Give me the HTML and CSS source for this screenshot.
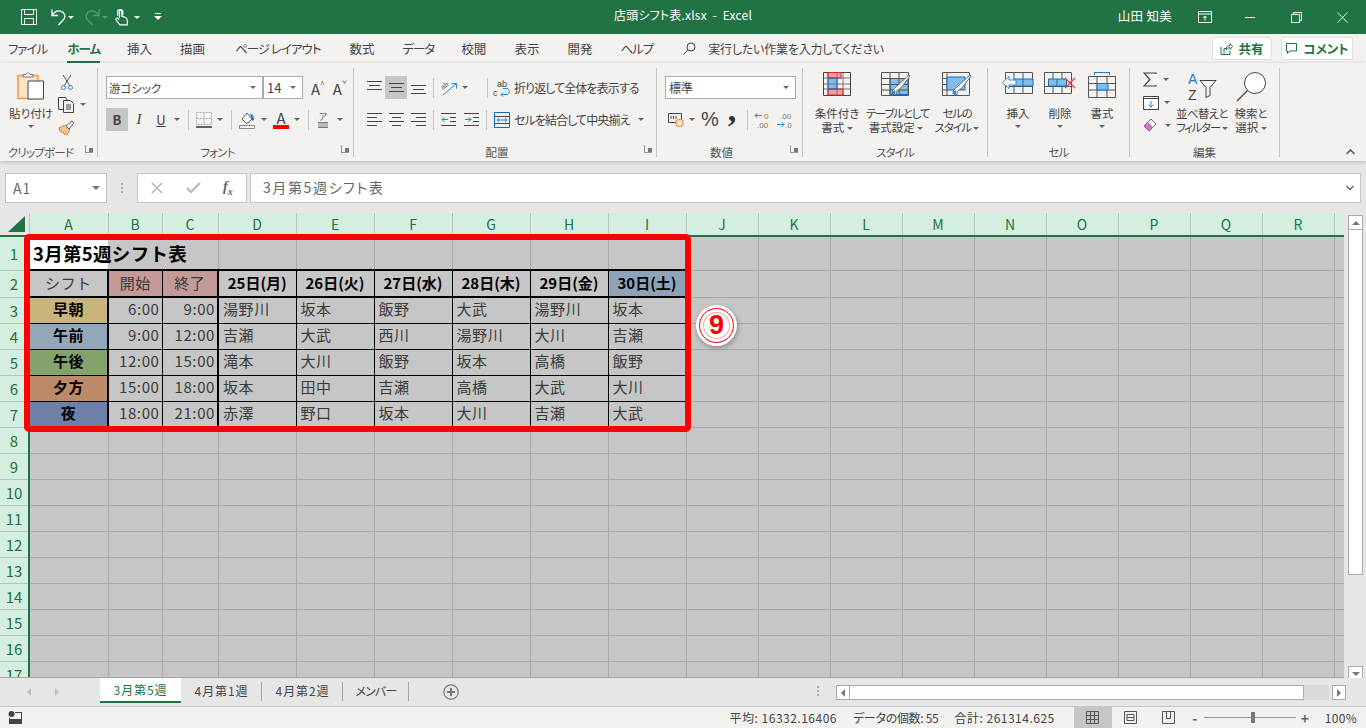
FILE: index.html
```html
<!DOCTYPE html>
<html lang="ja">
<head>
    <meta charset="UTF-8">
    <title>店頭シフト表.xlsx - Excel</title>
    <link rel="stylesheet" href="styles.css">
</head>
<body>

<!-- タイトルバー -->
<header class="titlebar">
    <div class="qat">
        <svg class="qat-save" width="18" height="18" viewBox="0 0 18 18" fill="none" stroke="#fff"><path d="M1.500 1.500h15v15h-15zM4.500 1.500v5h9v-5M4.500 16.500v-6h9v6"/></svg>
        <svg class="qat-undo" width="16" height="18" viewBox="0 0 16 18" fill="none" stroke="#fff" stroke-width="1.300"><path d="M1 1.500v6h6M1.500 7C4 3.500 7 2.500 9.500 3.200c4 1 5.500 5 3.500 7.800L7.500 17"/></svg>
        <span class="dd dd-white qat-dd1"></span>
        <svg class="qat-redo" width="16" height="18" viewBox="0 0 16 18" fill="none" stroke="#5b9a78" stroke-width="1.300"><path d="M15 1.500v6h-6M14.500 7C12 3.500 9 2.500 6.500 3.200c-4 1-5.500 5-3.500 7.800L8.500 17"/></svg>
        <span class="dd dd-dim qat-dd2"></span>
        <svg class="qat-touch" width="14" height="18" viewBox="0 0 16 20" fill="none" stroke="#fff" stroke-width="1.300"><path d="M3 8.500V4c0-3.500 6-3.500 6 0v4M5 11V3.500c0-1.500 2.500-1.500 2.500 0V9l4.500 1.500c1.500.5 2 1.500 2 3V19H5.500L1.500 13.500c-1-1.500 1-3 2.200-1.700L5 13"/></svg>
        <span class="dd dd-white qat-dd3"></span>
        <svg class="qat-more" width="8" height="8" viewBox="0 0 8 8" fill="#fff"><path d="M1 0h6v1H1zM0 3h8L4 7z"/></svg>
    </div>
    <div class="doc-title">店頭シフト表.xlsx&nbsp; -&nbsp; Excel</div>
    <div class="win">
        <span class="user">山田 知美</span>
        <svg class="win-layout" width="14" height="12" viewBox="0 0 14 12" fill="none" stroke="#fff"><path d="M.5.500h13v11H.500zM.5 3h13M7 9.500V5M5 7l2-2 2 2"/></svg>
        <svg class="win-min" width="11" height="11" viewBox="0 0 11 11" stroke="#fff"><path d="M0 5.500h10"/></svg>
        <svg class="win-max" width="11" height="11" viewBox="0 0 11 11" fill="none" stroke="#fff"><path d="M.5 2.500h8v8h-8zM2.500 2.500v-2h8v8h-2"/></svg>
        <svg class="win-close" width="11" height="11" viewBox="0 0 11 11" stroke="#fff"><path d="M.5.500l10 10M10.500.500l-10 10"/></svg>
    </div>
</header>

<!-- タブ -->
<nav class="tabs">
    <span class="tab kana tab-file">ファイル</span>
    <span class="tab kana tab-home">ホーム</span>
    <span class="tab">挿入</span>
    <span class="tab tab-draw">描画</span>
    <span class="tab kana tab-page">ページ レイアウト</span>
    <span class="tab">数式</span>
    <span class="tab kana tab-data">データ</span>
    <span class="tab">校閲</span>
    <span class="tab">表示</span>
    <span class="tab">開発</span>
    <span class="tab kana tab-help">ヘルプ</span>
    <span class="tell">
        <svg width="13" height="13" viewBox="0 0 13 13" fill="none" stroke="#444"><circle cx="8" cy="5" r="4"/><path d="M5 8l-4.500 4.500"/></svg>
        実行したい作業を入力してください
    </span>
    <span class="share">
        <button class="btn btn-share">
            <svg width="13" height="13" viewBox="0 0 13 13" fill="none" stroke="#217346"><path d="M4 11.500V6.500h2M1 5v7.500h9V9M6 8c0-3 2-4.500 4-4.500V1.500l2.500 3L10 7.500V5.500C8.500 5.500 7 6.500 6 8z"/></svg>
            共有
        </button>
        <button class="btn btn-comment">
            <svg width="13" height="13" viewBox="0 0 13 13" fill="none" stroke="#217346"><path d="M1.500 1.500h10v7.500h-7l-2 2.500v-2.500h-1z"/></svg>
            コメント
        </button>
    </span>
</nav>

<!-- リボン -->
<section class="ribbon">

    <div class="group g-clip">
        <div class="group-body flex">
            <div class="large paste">
                <div class="large-icon">
                    <svg width="28" height="28" viewBox="0 0 28 28"><path d="M1 3.500h20v23H1z" fill="#fbe3c8" stroke="#ed9a45" stroke-width="1.500"/><path d="M6 5V2.500h3C9 .5 13 .5 13 2.500h3V5z" fill="#fff" stroke="#777"/><path d="M11 9h15.500v18H11z" fill="#fff" stroke="#444"/></svg>
                </div>
                <div class="large-label">貼り付け</div>
                <span class="dd dd-center"></span>
            </div>
            <div class="stack">
                <div class="tool t-cut"><svg width="12" height="16" viewBox="0 0 12 16" fill="none"><path d="M2 1l7 11M10 1L3 12" stroke="#555"/><circle cx="2.500" cy="13.500" r="2" stroke="#2b88d8"/><circle cx="9.500" cy="13.500" r="2" stroke="#2b88d8"/></svg></div>
                <div class="tool t-copy"><svg width="17" height="16" viewBox="0 0 17 16" fill="none" stroke="#444"><path d="M5 12.500H.5V.500h7l2 3"/><path d="M5.500 3.500h7l3 3v9h-10zM8 8h5M8 10h5M8 12h5"/></svg><span class="dd dd-copy"></span></div>
                <div class="tool t-brush"><svg width="17" height="16" viewBox="0 0 17 16"><path d="M1 8l6-3 5 5-3 5-3-1-1-2-1 1-1-2-1 0z" fill="#f6c48e" stroke="#ed7d31"/><path d="M8 6l6-5 2 2-5 6z" fill="#fff" stroke="#555"/></svg></div>
            </div>
        </div>
        <div class="group-label kana-label shift-left">クリップボード</div>
        <span class="launcher"></span>
    </div>

    <div class="group g-font">
        <div class="group-body">
            <div class="row">
                <div class="combo c-font"><span>游ゴシック</span><span class="dd"></span></div>
                <div class="combo c-size"><span>14</span><span class="dd"></span></div>
                <div class="tool w22 grow-a">A<sup>^</sup></div>
                <div class="tool w22 grow-a">A<sup class="blue">ˇ</sup></div>
            </div>
            <div class="row row2">
                <div class="tool w22 on bold-b">B</div>
                <div class="tool w22 ital">I</div>
                <div class="tool w22 under">U</div>
                <div class="tool w10"><span class="dd"></span></div>
                <div class="vsep w12"></div>
                <div class="tool w19"><svg width="16" height="16" viewBox="0 0 16 16" fill="none"><path d="M.5.500h15v12H.500zM8 .500v12M.5 6.500h15" stroke="#aaa" stroke-dasharray="2 1"/><path d="M0 15h16" stroke="#333" stroke-width="1.500"/></svg></div>
                <div class="tool w14"><span class="dd"></span></div>
                <div class="vsep w8"></div>
                <div class="tool w24"><svg width="17" height="18" viewBox="0 0 17 18"><path d="M3 8l5-6 5 6-4 4H7z" fill="#fff" stroke="#555"/><path d="M11 3c3 0 4 3 4 6l-1.500 1-1-3z" fill="#1e78c8"/><path d="M.5 14.500h15v3H.500z" fill="#fff" stroke="#888"/></svg></div>
                <div class="tool w10"><span class="dd"></span></div>
                <div class="tool w24 color-a">A</div>
                <div class="tool w8"><span class="dd"></span></div>
                <div class="vsep w14"></div>
                <div class="tool w16 phon">ア<i></i></div>
                <div class="tool w18"><span class="dd"></span></div>
            </div>
        </div>
        <div class="group-label kana-label shift-left">フォント</div>
        <span class="launcher"></span>
    </div>

    <div class="group g-align">
        <div class="group-body">
            <div class="row">
                <div class="tool w22"><svg width="15" height="15" viewBox="0 0 15 15" stroke="#444"><path d="M0 1.500h15M2 5.500h11M0 9.500h15"/></svg></div>
                <div class="tool w22 on"><svg width="15" height="15" viewBox="0 0 15 15" stroke="#444"><path d="M0 3.500h15M2 7.500h11M0 11.500h15"/></svg></div>
                <div class="tool w22"><svg width="15" height="15" viewBox="0 0 15 15" stroke="#444"><path d="M0 5.500h15M2 9.500h11M0 13.500h15"/></svg></div>
                <div class="vsep w8"></div>
                <div class="tool w24"><svg width="18" height="18" viewBox="0 0 18 18" fill="none"><text class="svg-orient" transform="translate(3 11) rotate(-40)">ab</text><path d="M3 16L16 5M11.500 4.500h5v5" stroke="#1e88d8"/></svg></div>
                <div class="tool w8"><span class="dd"></span></div>
                <div class="tool w14"></div>
                <div class="vsep w8"></div>
                <div class="tool w22"><svg width="18" height="18" viewBox="0 0 18 18" fill="none"><text class="svg-ab" x="4" y="8">ab</text><text class="svg-ab" x="0" y="17">c</text><path d="M10 9.500h4c3 0 3 6 0 6H8M10 13.500l-2 2 2 2" stroke="#1e88d8"/></svg></div>
                <span class="tool-text">折り返して全体を表示する</span>
            </div>
            <div class="row row2">
                <div class="tool w22"><svg width="15" height="15" viewBox="0 0 15 15" stroke="#444"><path d="M0 1.500h15M0 5.500h10M0 9.500h15M0 13.500h10"/></svg></div>
                <div class="tool w22"><svg width="15" height="15" viewBox="0 0 15 15" stroke="#444"><path d="M0 1.500h15M3 5.500h9M0 9.500h15M3 13.500h9"/></svg></div>
                <div class="tool w22"><svg width="15" height="15" viewBox="0 0 15 15" stroke="#444"><path d="M0 1.500h15M5 5.500h10M0 9.500h15M5 13.500h10"/></svg></div>
                <div class="vsep w8"></div>
                <div class="tool w23"><svg width="15" height="15" viewBox="0 0 15 15" fill="none"><path d="M0 1.500h15M9 5.500h6M9 9.500h6M0 13.500h15" stroke="#444"/><path d="M7 7.500H1M3.500 5l-2.500 2.500 2.500 2.500" stroke="#1e88d8"/></svg></div>
                <div class="tool w22"><svg width="15" height="15" viewBox="0 0 15 15" fill="none"><path d="M0 1.500h15M9 5.500h6M9 9.500h6M0 13.500h15" stroke="#444"/><path d="M1 7.500h6M4.500 5l2.500 2.500-2.500 2.500" stroke="#1e88d8"/></svg></div>
                <div class="vsep w8"></div>
                <div class="tool w23"><svg width="16" height="16" viewBox="0 0 16 16" fill="none"><path d="M.5.500h15v15H.500z" stroke="#106ebe"/><path d="M.5 4.500h15M.5 11.500h15" stroke="#444"/><path d="M3 8h10M5 6L3 8l2 2M11 6l2 2-2 2" stroke="#1e88d8"/></svg></div>
                <span class="tool-text merge">セルを結合して中央揃え</span>
                <span class="dd"></span>
            </div>
        </div>
        <div class="group-label shift-left">配置</div>
        <span class="launcher"></span>
    </div>

    <div class="group g-num">
        <div class="group-body">
            <div class="row">
                <div class="combo c-num"><span>標準</span><span class="dd"></span></div>
            </div>
            <div class="row row2">
                <div class="tool w21"><svg width="16" height="15" viewBox="0 0 16 15" fill="none"><path d="M.5 1.500h13v9H.500z" stroke="#444"/><path d="M3 4v3M5.500 4v3M8 4v3" stroke="#444"/><ellipse cx="11.500" cy="9" rx="3.500" ry="1.500" fill="#fbe3c8" stroke="#ed7d31"/><path d="M8 9v4c0 2 7 2 7 0V9" fill="#fbe3c8" stroke="#ed7d31"/></svg></div>
                <div class="tool w12"><span class="dd"></span></div>
                <div class="tool w24 pct">%</div>
                <div class="tool w20 comma">,</div>
                <div class="vsep w10"></div>
                <div class="tool w21"><svg width="17" height="18" viewBox="0 0 17 18" fill="none"><path d="M8 4.500H1M3.500 2L1 4.500 3.500 7" stroke="#1e88d8"/><text class="svg-dec" x="10" y="8">0</text><text class="svg-dec" x="3" y="17">.00</text></svg></div>
                <div class="tool w23"><svg width="17" height="18" viewBox="0 0 17 18" fill="none"><path d="M1 13.500h7M5.500 11L8 13.500 5.500 16" stroke="#1e88d8"/><text class="svg-dec" x="4" y="8">.00</text><text class="svg-dec" x="9" y="17">.0</text></svg></div>
            </div>
        </div>
        <div class="group-label shift-left">数値</div>
        <span class="launcher"></span>
    </div>

    <div class="group g-style">
        <div class="group-body flex">
            <div class="large w58">
                <div class="large-icon">
                    <svg width="28" height="24" viewBox="0 0 28 24" fill="none"><path d="M5 .5h13v5.500H5zM5 17h15v6H5z" fill="#ff9ca3"/><path d="M5 6h9v11H5z" fill="#83bbea"/><path d="M.5 6h27M.5 17h27M.5 12h27M5 .5v23M14 .5v23M20 .5v23" stroke="#777"/><path d="M.5.500h27v23H.500z" stroke="#444"/><path d="M5 .5h13v5.500H5zM5 17h15v6H5z" stroke="#d8232a"/><path d="M5 6h9v11H5z" stroke="#106ebe"/></svg>
                </div>
                <div class="large-label">条件付き<br>書式 <span class="dd"></span></div>
            </div>
            <div class="large w60">
                <div class="large-icon">
                    <svg width="30" height="24" viewBox="0 0 30 24" fill="none"><path d="M9 6.500h18v16H9z" fill="#83bbea" stroke="#106ebe"/><path d="M.5.500h27v23H.500zM.5 6.500h27M.5 12.500h27M.5 18h27M9 .5v23M18 .5v23" stroke="#555"/><path d="M15 23c0-4 2-6 4-6l10-13-1-1-12 11c-2 1-3 4-5 5 1 2 2 4 4 4z" fill="#fff" stroke="#666"/><path d="M13 23c1-1 2-3 1-5l-4 3c1 1 2 2 3 2z" fill="#2b88d8"/></svg>
                </div>
                <div class="large-label"><span class="narrow">テーブルとして</span><br>書式設定 <span class="dd"></span></div>
            </div>
            <div class="large w62">
                <div class="large-icon">
                    <svg width="30" height="24" viewBox="0 0 30 24" fill="none"><path d="M.5.500h27v23H.500zM.5 6.500h5M.5 12.500h5M.5 18h5M5 .5v23" stroke="#555"/><path d="M5 5h18v13H5z" fill="#83bbea" stroke="#106ebe"/><path d="M15 23c0-4 2-6 4-6l10-13-1-1-12 11c-2 1-3 4-5 5 1 2 2 4 4 4z" fill="#fff" stroke="#666"/><path d="M13 23c1-1 2-3 1-5l-4 3c1 1 2 2 3 2z" fill="#2b88d8"/></svg>
                </div>
                <div class="large-label"><span class="narrow">セルの</span><br><span class="narrow">スタイル</span> <span class="dd"></span></div>
            </div>
        </div>
        <div class="group-label kana-label">スタイル</div>
    </div>

    <div class="group g-cell">
        <div class="group-body flex">
            <div class="large w42">
                <div class="large-icon">
                    <svg width="32" height="22" viewBox="0 0 32 22" fill="none"><path d="M3.500.500h27v21h-27zM3.500 14.500h27M12 .5v21M21 .5v21" stroke="#555"/><path d="M12 7h19v7H12z" fill="#83bbea" stroke="#106ebe"/><path d="M21 7v7" stroke="#106ebe"/><path d="M14 8v5H7v3.500L.5 10.500 7 4.500V8z" fill="#fff" stroke="#2b88d8"/></svg>
                </div>
                <div class="large-label">挿入</div>
                <span class="dd dd-center"></span>
            </div>
            <div class="large w42">
                <div class="large-icon">
                    <svg width="32" height="22" viewBox="0 0 32 22" fill="none"><path d="M.5.500h27v21H.500zM.5 14.500h27M9 .5v21M18 .5v21" stroke="#555"/><path d="M4.500 7h18v7h-18z" fill="#83bbea" stroke="#106ebe"/><path d="M13 7v7" stroke="#106ebe"/><path d="M21 6l10 10M31 6L21 16" stroke="#ee3b3b" stroke-width="1.300"/></svg>
                </div>
                <div class="large-label">削除</div>
                <span class="dd dd-center"></span>
            </div>
            <div class="large w42">
                <div class="large-icon">
                    <svg width="28" height="26" viewBox="0 0 28 26" fill="none"><path d="M6 .5h16M6.500 0v3M21.500 0v3" stroke="#1e78c8"/><path d="M.5 4.500h27v21H.500zM.5 11.500h27M.5 18h27M9 4.500v21M19 4.500v21" stroke="#555"/><path d="M9 11.500h11V18H9z" fill="#83bbea" stroke="#106ebe"/></svg>
                </div>
                <div class="large-label">書式</div>
                <span class="dd dd-center"></span>
            </div>
        </div>
        <div class="group-label kana-label">セル</div>
    </div>

    <div class="group g-edit">
        <div class="group-body flex">
            <div class="stack w36">
                <div class="tool t-edit"><svg width="15" height="15" viewBox="0 0 15 15" fill="none" stroke="#444" stroke-width="1.200"><path d="M13 2V1H1l6 6.500L1 14h12v-1"/></svg><span class="dd"></span></div>
                <div class="tool t-edit"><svg width="16" height="14" viewBox="0 0 16 14" fill="none"><path d="M.5.500h15v13H.500z" fill="#fff" stroke="#444"/><path d="M.5 2.500h15" stroke="#444"/><path d="M8 5v6M5.500 8.500L8 11l2.500-2.500" stroke="#1e88d8"/></svg><span class="dd"></span></div>
                <div class="tool t-edit"><svg width="17" height="15" viewBox="0 0 17 15"><path d="M1 8l7-7 5 5-7 7z" fill="#fff" stroke="#a349a4"/><path d="M1 8l3.500-3.500 5 5L6 13z" fill="#c879c9" stroke="#a349a4"/></svg><span class="dd"></span></div>
            </div>
            <div class="large w52">
                <div class="large-icon">
                    <svg width="30" height="32" viewBox="0 0 30 32" fill="none"><text class="svg-az blue-fill" x="1" y="12">A</text><text class="svg-az" x="1" y="28">Z</text><path d="M13 8.500h16l-6 7v8l-4 2v-10z" stroke="#444"/></svg>
                </div>
                <div class="large-label"><span class="narrow-s">並べ替えと</span><br><span class="narrow">フィルター</span> <span class="dd"></span></div>
            </div>
            <div class="large w46">
                <div class="large-icon">
                    <svg width="30" height="30" viewBox="0 0 30 30" fill="none" stroke="#444"><circle cx="19" cy="11" r="10.500" fill="#fff"/><path d="M11.500 18.500L1 29" stroke-width="1.200"/></svg>
                </div>
                <div class="large-label">検索と<br>選択 <span class="dd"></span></div>
            </div>
        </div>
        <div class="group-label">編集</div>
    </div>

    <svg class="collapse" width="9" height="6" viewBox="0 0 9 6" fill="none" stroke="#555" stroke-width="1.500"><path d="M.5 5L4.500 1l4 4"/></svg>
</section>

<!-- 数式バー -->
<section class="fbar">
    <div class="namebox"><span>A1</span><span class="dd dd-big"></span></div>
    <div class="fdots"></div>
    <div class="fbtns">
        <svg width="12" height="12" viewBox="0 0 12 12" stroke="#b5b5b5" stroke-width="1.500"><path d="M1 1l10 10M11 1L1 11"/></svg>
        <svg width="15" height="12" viewBox="0 0 15 12" fill="none" stroke="#b5b5b5" stroke-width="2"><path d="M1 6l4 4 9-9"/></svg>
        <span class="fx">f<sub>x</sub></span>
    </div>
    <div class="finput"><span class="ftext">3月第5週シフト表</span>
        <svg width="8" height="6" viewBox="0 0 8 6" fill="none" stroke="#666" stroke-width="1.500"><path d="M.5 1L4 4.500 7.500 1"/></svg>
    </div>
</section>

<!-- シート -->
<main class="sheet">
    <div class="grid-wrap">
        <table class="grid">
            <colgroup>
                <col class="c-rh"><col class="c-a"><col class="c-b"><col class="c-c">
                <col class="c-wide"><col class="c-wide"><col class="c-wide"><col class="c-wide"><col class="c-wide"><col class="c-wide">
                <col class="c-std"><col class="c-std"><col class="c-std"><col class="c-std"><col class="c-std"><col class="c-std"><col class="c-std"><col class="c-std"><col class="c-std">
                <col class="c-end">
            </colgroup>
            <thead>
                <tr class="r-head">
                    <th class="corner"><span class="tri"></span></th>
                    <th>A</th><th>B</th><th>C</th><th>D</th><th>E</th><th>F</th><th>G</th><th>H</th><th>I</th>
                    <th>J</th><th>K</th><th>L</th><th>M</th><th>N</th><th>O</th><th>P</th><th>Q</th><th>R</th><th></th>
                </tr>
            </thead>
            <tbody>
                <tr class="r1">
                    <th>1</th><td class="title active">3月第5週シフト表</td><td class="nob"></td><td class="nob"></td>
                    <td></td><td></td><td></td><td></td><td></td><td class="edge"></td>
                    <td></td><td></td><td></td><td></td><td></td><td></td><td></td><td></td><td></td><td></td>
                </tr>
                <tr class="r2">
                    <th>2</th><td class="b ctr thick">シフト</td><td class="b ctr rose">開始</td><td class="b ctr rose thick">終了</td>
                    <td class="b hd">25日(月)</td><td class="b hd">26日(火)</td><td class="b hd">27日(水)</td><td class="b hd">28日(木)</td><td class="b hd">29日(金)</td><td class="b hd sat edge">30日(土)</td>
                    <td></td><td></td><td></td><td></td><td></td><td></td><td></td><td></td><td></td><td></td>
                </tr>
                <tr>
                    <th>3</th><td class="b shift morning">早朝</td><td class="b time">6:00</td><td class="b time thick">9:00</td>
                    <td class="b">湯野川</td><td class="b">坂本</td><td class="b">飯野</td><td class="b">大武</td><td class="b">湯野川</td><td class="b edge">坂本</td>
                    <td></td><td></td><td></td><td></td><td></td><td></td><td></td><td></td><td></td><td></td>
                </tr>
                <tr>
                    <th>4</th><td class="b shift forenoon">午前</td><td class="b time">9:00</td><td class="b time thick">12:00</td>
                    <td class="b">吉瀬</td><td class="b">大武</td><td class="b">西川</td><td class="b">湯野川</td><td class="b">大川</td><td class="b edge">吉瀬</td>
                    <td></td><td></td><td></td><td></td><td></td><td></td><td></td><td></td><td></td><td></td>
                </tr>
                <tr>
                    <th>5</th><td class="b shift afternoon">午後</td><td class="b time">12:00</td><td class="b time thick">15:00</td>
                    <td class="b">滝本</td><td class="b">大川</td><td class="b">飯野</td><td class="b">坂本</td><td class="b">高橋</td><td class="b edge">飯野</td>
                    <td></td><td></td><td></td><td></td><td></td><td></td><td></td><td></td><td></td><td></td>
                </tr>
                <tr>
                    <th>6</th><td class="b shift evening">夕方</td><td class="b time">15:00</td><td class="b time thick">18:00</td>
                    <td class="b">坂本</td><td class="b">田中</td><td class="b">吉瀬</td><td class="b">高橋</td><td class="b">大武</td><td class="b edge">大川</td>
                    <td></td><td></td><td></td><td></td><td></td><td></td><td></td><td></td><td></td><td></td>
                </tr>
                <tr>
                    <th>7</th><td class="b shift night">夜</td><td class="b time">18:00</td><td class="b time thick">21:00</td>
                    <td class="b">赤澤</td><td class="b">野口</td><td class="b">坂本</td><td class="b">大川</td><td class="b">吉瀬</td><td class="b edge">大武</td>
                    <td></td><td></td><td></td><td></td><td></td><td></td><td></td><td></td><td></td><td></td>
                </tr>
                <tr><th>8</th><td></td><td></td><td></td><td></td><td></td><td></td><td></td><td></td><td></td><td></td><td></td><td></td><td></td><td></td><td></td><td></td><td></td><td></td><td></td></tr>
                <tr><th>9</th><td></td><td></td><td></td><td></td><td></td><td></td><td></td><td></td><td></td><td></td><td></td><td></td><td></td><td></td><td></td><td></td><td></td><td></td><td></td></tr>
                <tr><th>10</th><td></td><td></td><td></td><td></td><td></td><td></td><td></td><td></td><td></td><td></td><td></td><td></td><td></td><td></td><td></td><td></td><td></td><td></td><td></td></tr>
                <tr><th>11</th><td></td><td></td><td></td><td></td><td></td><td></td><td></td><td></td><td></td><td></td><td></td><td></td><td></td><td></td><td></td><td></td><td></td><td></td><td></td></tr>
                <tr><th>12</th><td></td><td></td><td></td><td></td><td></td><td></td><td></td><td></td><td></td><td></td><td></td><td></td><td></td><td></td><td></td><td></td><td></td><td></td><td></td></tr>
                <tr><th>13</th><td></td><td></td><td></td><td></td><td></td><td></td><td></td><td></td><td></td><td></td><td></td><td></td><td></td><td></td><td></td><td></td><td></td><td></td><td></td></tr>
                <tr><th>14</th><td></td><td></td><td></td><td></td><td></td><td></td><td></td><td></td><td></td><td></td><td></td><td></td><td></td><td></td><td></td><td></td><td></td><td></td><td></td></tr>
                <tr><th>15</th><td></td><td></td><td></td><td></td><td></td><td></td><td></td><td></td><td></td><td></td><td></td><td></td><td></td><td></td><td></td><td></td><td></td><td></td><td></td></tr>
                <tr><th>16</th><td></td><td></td><td></td><td></td><td></td><td></td><td></td><td></td><td></td><td></td><td></td><td></td><td></td><td></td><td></td><td></td><td></td><td></td><td></td></tr>
                <tr><th>17</th><td></td><td></td><td></td><td></td><td></td><td></td><td></td><td></td><td></td><td></td><td></td><td></td><td></td><td></td><td></td><td></td><td></td><td></td><td></td></tr>
            </tbody>
        </table>
        <!-- 説明用の赤枠と番号 -->
        <div class="red-frame"></div>
        <div class="badge"><span>9</span></div>
    </div>
    <div class="vscroll">
        <div class="sb-btn"><span class="tri-up"></span></div>
        <div class="sb-thumb"></div>
        <div class="sb-track"></div>
        <div class="sb-btn"><span class="tri-down"></span></div>
    </div>
</main>

<!-- シートタブ -->
<section class="sheetbar">
    <div class="sheet-nav">
        <span class="tri-left"></span>
        <span class="tri-right"></span>
    </div>
    <div class="sheet-tab active-tab">3月第5週</div>
    <div class="sheet-tab">4月第1週</div>
    <div class="sheet-tab">4月第2週</div>
    <div class="sheet-tab member">メンバー</div>
    <svg class="add" width="16" height="16" viewBox="0 0 16 16" fill="none" stroke="#777"><circle cx="8" cy="8" r="7.200" stroke-width="1.200"/><path d="M8 4v8M4 8h8" stroke-width="2"/></svg>
    <div class="hdots"></div>
    <div class="hscroll">
        <div class="sb-btn h"><span class="tri-left dark"></span></div>
        <div class="h-thumb"></div>
        <div class="h-track"></div>
        <div class="sb-btn h"><span class="tri-right dark"></span></div>
    </div>
</section>

<!-- ステータスバー -->
<footer class="status">
    <svg class="macro" width="14" height="13" viewBox="0 0 14 13" fill="#444"><circle cx="3.500" cy="3" r="3"/><path d="M7 1h7v12H1V7h1v1h11V2H7zM3 9h2v1H3zm3 0h2v1H6zm3 0h2v1H9zm-6 2h2v1H3zm3 0h2v1H6zm3 0h2v1H9z"/></svg>
    <div class="stats">
        <span class="st-avg">平均: 16332.16406</span>
        <span class="st-count">データの個数: 55</span>
        <span class="st-sum">合計: 261314.625</span>
    </div>
    <div class="view on">
        <svg width="13" height="13" viewBox="0 0 13 13" fill="none" stroke="#555"><path d="M.5.500h12v12H.500zM.5 4.500h12M.5 8.500h12M4.500.500v12M8.500.500v12"/></svg>
    </div>
    <div class="view">
        <svg width="13" height="13" viewBox="0 0 13 13" fill="none" stroke="#555"><path d="M.5.500h12v12H.500zM3 3.500h7v6H3zM3 6.500h7"/></svg>
    </div>
    <div class="view view-last">
        <svg width="13" height="13" viewBox="0 0 13 13" fill="none" stroke="#555"><path d="M.5.500h12v12H.500zM4.500.500v7h4v-7"/></svg>
    </div>
    <div class="zoom">
        <span class="z-btn">-</span>
        <div class="slider"><span class="knob"></span></div>
        <span class="z-btn">+</span>
    </div>
    <span class="zoom-val">100%</span>
</footer>

</body>
</html>
```

FILE: styles.css
```css
* {
    box-sizing: border-box;
}

html, body {
    margin: 0;
    padding: 0;
    height: 728px;
    overflow: hidden;
}

body {
    width: 1366px;
    font-family: "Noto Sans CJK JP", "Noto Sans", sans-serif;
    font-size: 12px;
    font-feature-settings: "palt";
    color: #444;
    background-color: #e6e6e6;
    display: flex;
    flex-direction: column;
}

/* 共通パーツ */
.dd {
    display: inline-block;
    width: 0;
    height: 0;
    border-left: 3px solid transparent;
    border-right: 3px solid transparent;
    border-top: 3px solid #666;
    vertical-align: middle;
}

.dd-white { border-top-color: #fff; }
.dd-dim { border-top-color: #5b9a78; }
.dd-center { display: block; margin: 5px auto 0; }
.dd-big {
    border-left-width: 4px;
    border-right-width: 4px;
    border-top-width: 4px;
    border-top-color: #777;
}

.flex { display: flex; }

.w8 { width: 8px; }
.w10 { width: 10px; }
.w12 { width: 12px; }
.w14 { width: 14px; }
.w16 { width: 16px; }
.w18 { width: 18px; }
.w19 { width: 19px; }
.w20 { width: 20px; }
.w21 { width: 21px; }
.w22 { width: 22px; }
.w23 { width: 23px; }
.w24 { width: 24px; }
.w36 { width: 36px; }
.w42 { width: 42px; }
.w46 { width: 46px; }
.w52 { width: 52px; }
.w58 { width: 58px; }
.w60 { width: 60px; }
.w62 { width: 62px; }

/* タイトルバー */
.titlebar {
    height: 34px;
    background-color: #217346;
    color: #fff;
    display: grid;
    grid-template-columns: 1fr auto 1fr;
    align-items: center;
    flex: none;
}

.qat {
    display: flex;
    align-items: center;
    padding-left: 20px;
}

.qat-undo { margin-left: 13px; }
.qat-dd1 { margin-left: 1px; }
.qat-redo { margin-left: 10px; }
.qat-dd2 { margin-left: 2px; }
.qat-touch { margin-left: 7px; }
.qat-dd3 { margin-left: 5px; }
.qat-more { margin-left: 14px; }

.doc-title {
    font-size: 12px;
    letter-spacing: 0.2px;
    padding-bottom: 6px;
}

.win {
    display: flex;
    align-items: center;
    justify-content: flex-end;
    padding-right: 18px;
}

.user {
    font-size: 12.500px;
    letter-spacing: 0.3px;
    padding-bottom: 4px;
}

.win-layout { margin-left: 26px; }
.win-min { margin-left: 33px; }
.win-max { margin-left: 35px; }
.win-close { margin-left: 35px; }

/* タブ */
.tabs {
    height: 29px;
    background-color: #f3f2f1;
    display: flex;
    align-items: center;
    padding-left: 8px;
    position: relative;
    flex: none;
    font-size: 12.500px;
}

.tab {
    margin-right: 28px;
    white-space: nowrap;
    line-height: 20px;
    color: #444;
}

.kana { letter-spacing: -1px; }

.tab-file { margin-right: 20px; }

.tab-home {
    font-weight: 700;
    color: #217346;
    margin-right: 27px;
    position: relative;
}

.tab-home::after {
    content: "";
    position: absolute;
    left: 0;
    right: 0;
    bottom: -5px;
    height: 3px;
    background-color: #217346;
}

.tab-draw { margin-right: 30px; }
.tab-page { margin-right: 29px; }
.tab-data { margin-right: 27px; }
.tab-help { margin-right: 30px; }

.tell {
    display: flex;
    align-items: center;
    gap: 12px;
    font-size: 12px;
    letter-spacing: -0.2px;
}

.share {
    margin-left: auto;
    margin-right: 13px;
    display: flex;
    gap: 9px;
}

.btn {
    height: 23px;
    background-color: #fff;
    border: 1px solid #e1dfdd;
    border-radius: 2px;
    color: #217346;
    font: inherit;
    font-weight: 700;
    font-size: 12.500px;
    font-feature-settings: "palt";
    display: flex;
    align-items: center;
    justify-content: center;
    gap: 5px;
    padding: 0;
}

.btn-share { width: 60px; }
.btn-comment { width: 72px; }

/* リボン */
.ribbon {
    height: 98px;
    background-color: #f3f2f1;
    display: flex;
    align-items: flex-start;
    position: relative;
    flex: none;
    box-shadow: 0 1px 4px rgba(0, 0, 0, 0.22);
    z-index: 1;
    padding-top: 5px;
}

.group {
    height: 89px;
    border-right: 1px solid #c8c6c4;
    position: relative;
    flex: none;
}

.g-clip { width: 98px; }
.g-font { width: 256px; padding-left: 8px; }
.g-align { width: 303px; padding-left: 9px; }
.g-num { width: 146px; padding-left: 8px; }
.g-style { width: 185px; padding-left: 5px; }
.g-cell { width: 142px; padding-left: 9px; }
.g-edit { width: 150px; padding-left: 10px; }

.group-body { height: 73px; }

.group-label {
    position: absolute;
    left: 0;
    right: 0;
    top: 76px;
    text-align: center;
    font-size: 11.500px;
    line-height: 16px;
    color: #555;
}

.kana-label { letter-spacing: -0.8px; }
.shift-left { padding-right: 16px; }

.launcher {
    position: absolute;
    right: 4px;
    bottom: 4px;
    width: 8px;
    height: 8px;
    border-left: 1px solid #999;
    border-bottom: 1px solid #999;
}

.launcher::after {
    content: "";
    position: absolute;
    right: 0;
    bottom: 0;
    width: 4px;
    height: 4px;
    background-color: #777;
}

.row {
    display: flex;
    align-items: center;
    height: 23px;
    margin-top: 8px;
}

.row2 { margin-top: 9px; }

.tool {
    height: 23px;
    display: flex;
    align-items: center;
    justify-content: center;
    flex: none;
}

.tool.on { background-color: #c6c6c6; }

.vsep {
    height: 23px;
    display: flex;
    justify-content: center;
    align-items: center;
    flex: none;
}

.vsep::before {
    content: "";
    width: 1px;
    height: 20px;
    background-color: #c8c6c4;
}

.combo {
    height: 23px;
    background-color: #fff;
    border: 1px solid #ababab;
    display: flex;
    align-items: center;
    justify-content: space-between;
    padding: 0 6px 0 2px;
    font-size: 11.500px;
    flex: none;
}

.c-font { width: 157px; }
.c-size { width: 40px; margin-right: 4px; font-size: 13px; padding-left: 3px; }
.c-num { width: 131px; font-size: 12px; padding-left: 3px; }

.grow-a {
    font-size: 15px;
    color: #444;
    align-items: flex-end;
}

.grow-a sup {
    font-size: 9px;
    line-height: 1;
    margin-bottom: 10px;
    color: #c45a11;
}

.grow-a sup.blue { color: #1e78c8; }

.bold-b {
    font-weight: 700;
    font-size: 13px;
}

.ital {
    font-family: "Liberation Serif", serif;
    font-style: italic;
    font-size: 15px;
}

.under {
    font-size: 13px;
    text-decoration: underline;
}

.color-a {
    font-size: 15px;
    position: relative;
    line-height: 1;
    padding-bottom: 5px;
}

.color-a::after {
    content: "";
    position: absolute;
    left: 4px;
    right: 4px;
    bottom: 2px;
    height: 4px;
    background-color: #f00;
}

.phon {
    font-size: 9px;
    flex-direction: column;
    line-height: 9px;
    color: #666;
}

.phon i {
    display: block;
    width: 10px;
    height: 6px;
    margin-top: 1px;
    border-top: 1px solid #777;
    border-bottom: 1px solid #777;
    background-color: #bbb;
}

.tool-text {
    white-space: nowrap;
    margin-left: 1px;
    font-size: 12px;
    letter-spacing: -0.9px;
    color: #444;
}

.merge { margin-left: 1px; margin-right: 8px; }

.svg-ab {
    font-family: "Liberation Sans", sans-serif;
    font-size: 9px;
    fill: #444;
}

.svg-orient {
    font-family: "Liberation Sans", sans-serif;
    font-size: 7px;
    fill: #444;
}

.svg-dec {
    font-family: "Liberation Sans", sans-serif;
    font-size: 8px;
    fill: #777;
}

.svg-az {
    font-family: "Liberation Sans", sans-serif;
    font-size: 14px;
    fill: #444;
}

.svg-az.blue-fill { fill: #1e78c8; }

.pct { font-size: 20px; color: #444; font-family: "Liberation Sans", sans-serif; }

.comma {
    font-size: 34px;
    font-weight: 700;
    line-height: 12px;
    padding-bottom: 20px;
    font-family: "Liberation Serif", serif;
    color: #333;
}

.large {
    padding-top: 4px;
    text-align: center;
    flex: none;
    white-space: nowrap;
}

.paste { width: 50px; margin-left: 6px; }

.large-icon {
    height: 30px;
    display: flex;
    justify-content: center;
    align-items: flex-start;
}

.large-label {
    margin-top: 4px;
    font-size: 11.500px;
    line-height: 14px;
    color: #444;
}

.narrow { letter-spacing: -1.300px; }
.narrow-s { letter-spacing: -0.700px; }

.stack {
    display: flex;
    flex-direction: column;
    flex: none;
}

.g-clip .stack {
    margin-left: 2px;
    width: 32px;
    padding-top: 2px;
}

.t-cut, .t-copy, .t-brush {
    justify-content: flex-start;
    gap: 5px;
}

.t-cut { padding-left: 3px; }

.t-edit {
    justify-content: flex-start;
    gap: 5px;
    padding-left: 3px;
}

.collapse {
    position: absolute;
    right: 11px;
    bottom: 6px;
}

/* 数式バー */
.fbar {
    height: 52px;
    background-color: #e6e6e6;
    display: flex;
    padding-top: 12px;
    padding-left: 5px;
    padding-right: 5px;
    flex: none;
}

.namebox {
    width: 102px;
    height: 30px;
    background-color: #fff;
    border: 1px solid #c6c6c6;
    display: flex;
    align-items: center;
    justify-content: space-between;
    padding: 0 6px 0 7px;
    font-size: 14px;
    letter-spacing: 1px;
    color: #666;
}

.fdots {
    width: 30px;
    height: 30px;
    display: flex;
    align-items: center;
    justify-content: center;
}

.fdots::before {
    content: "";
    width: 2px;
    height: 10px;
    background-image: linear-gradient(#aaa 2px, transparent 2px);
    background-size: 2px 4px;
}

.fbtns {
    width: 110px;
    height: 30px;
    background-color: #fff;
    border: 1px solid #c6c6c6;
    display: flex;
    align-items: center;
    gap: 23px;
    padding-left: 13px;
}

.fx {
    font-family: "Liberation Serif", serif;
    font-style: italic;
    font-weight: 700;
    font-size: 14px;
    color: #666;
    margin-left: -1px;
}

.fx sub { font-size: 10px; }

.finput {
    flex: 1;
    height: 30px;
    margin-left: 3px;
    background-color: #fff;
    border: 1px solid #c6c6c6;
    display: flex;
    align-items: center;
    justify-content: space-between;
    padding: 0 6px 0 12px;
    font-size: 14px;
    letter-spacing: 1.600px;
    color: #666;
}

.ftext { padding-bottom: 3px; }

/* シート */
.sheet {
    height: 465px;
    display: flex;
    flex: none;
    background-color: #e6e6e6;
}

.grid-wrap {
    width: 1344px;
    height: 465px;
    position: relative;
    overflow: hidden;
    border-bottom: 1px solid #a6a6a6;
    flex: none;
}

.grid {
    border-collapse: collapse;
    table-layout: fixed;
    width: 1344px;
    background-color: #c6c6c6;
    font-size: 15px;
    font-feature-settings: normal;
}

.c-rh { width: 29px; }
.c-a { width: 79px; }
.c-b { width: 54px; }
.c-c { width: 56px; }
.c-wide { width: 78px; }
.c-std { width: 72px; }
.c-end { width: 10px; }

.grid th {
    background-color: #d4efdf;
    color: #217346;
    font-weight: 400;
    padding: 0;
    text-align: center;
    border-right: 1px solid #b3c6bb;
    border-bottom: 1px solid #b3c6bb;
    font-size: 14px;
}

.grid tbody th {
    border-right: 2px solid #217346;
    font-size: 15px;
    text-align: center;
}

.grid thead th {
    border-bottom: 2px solid #217346;
    border-top: 0;
}

.corner {
    position: relative;
}

.tri {
    position: absolute;
    right: 4px;
    bottom: 3px;
    width: 0;
    height: 0;
    border-left: 17px solid transparent;
    border-bottom: 16px solid #217346;
}

.grid .corner {
    background-color: #e6e6e6;
}

.r-head { height: 23px; }
.grid tbody tr { height: 26px; }
.grid tbody tr.r1 { height: 34px; }
.grid tbody tr.r2 { height: 27px; }

.grid td {
    padding: 0 0 3px 4px;
    border: 1px solid #a9a9a9;
    white-space: nowrap;
    color: #3a3a3a;
    letter-spacing: 0.6px;
    line-height: 1;
}

.grid td.b { border: 1px solid #000; }
.grid td.nob { border-right: 0; border-left: 0; border-bottom: 2px solid #000; }

.grid td.title {
    background-color: #fff;
    color: #000;
    font-weight: 700;
    font-size: 18.500px;
    letter-spacing: 0.3px;
    padding: 0 0 0 3px;
    border-right: 0;
    border-bottom: 2px solid #000;
}

.r1 td { border-bottom: 2px solid #000; }
.r1 td:nth-child(n+11) { border-bottom: 1px solid #a9a9a9; }

.grid .r2 td.b { border-top: 2px solid #000; border-bottom: 2px solid #000; }
.grid td.thick { border-right: 2px solid #000; }
.grid td.shift { border-right: 2px solid #000; }
.grid td.edge { border-right: 1px solid #000; }

.grid td.ctr { text-align: center; padding-left: 0; }

.grid td.hd {
    text-align: center;
    padding-left: 0;
    font-weight: 700;
    color: #000;
    letter-spacing: 0;
}

.grid td.rose { background-color: #c49a98; }
.grid td.sat { background-color: #8ea2b8; }

.grid td.time {
    text-align: right;
    padding: 0 2px 3px 0;
}

.grid td.shift {
    text-align: center;
    padding-left: 0;
    font-weight: 700;
    color: #000;
}

.morning { background-color: #c9b57b; }
.forenoon { background-color: #93a7bb; }
.afternoon { background-color: #83a26c; }
.evening { background-color: #bd8a68; }
.night { background-color: #6c80a8; }

.red-frame {
    position: absolute;
    left: 24px;
    top: 21px;
    width: 667px;
    height: 198px;
    border: 6.500px solid #f00;
    border-radius: 5px;
}

.badge {
    position: absolute;
    left: 696px;
    top: 92px;
    width: 41px;
    height: 41px;
    border-radius: 50%;
    background-color: #fff;
    box-shadow: 1px 2px 5px rgba(0, 0, 0, 0.3);
    display: flex;
    align-items: center;
    justify-content: center;
}

.badge span {
    width: 35px;
    height: 35px;
    border-radius: 50%;
    border: 1px solid #f00;
    box-shadow: inset 0 0 0 3px #fff, inset 0 0 0 4px #f7a8a8;
    color: #f00;
    font-family: "Liberation Sans", sans-serif;
    font-weight: 700;
    font-size: 27px;
    line-height: 33px;
    text-align: center;
}

.vscroll {
    width: 15px;
    margin-left: 4px;
    height: 466px;
    margin-top: 2px;
    display: flex;
    flex-direction: column;
}

.sb-btn {
    width: 15px;
    height: 15px;
    background-color: #fff;
    border: 1px solid #ababab;
    display: flex;
    align-items: center;
    justify-content: center;
    flex: none;
}

.sb-thumb {
    height: 345px;
    background-color: #fff;
    border: 1px solid #ababab;
    border-top: 0;
    flex: none;
}

.sb-track { flex: 1; }

.tri-up, .tri-down, .tri-left, .tri-right {
    display: inline-block;
    width: 0;
    height: 0;
}

.tri-up {
    border-left: 4px solid transparent;
    border-right: 4px solid transparent;
    border-bottom: 4px solid #777;
}

.tri-down {
    border-left: 4px solid transparent;
    border-right: 4px solid transparent;
    border-top: 4px solid #777;
}

.tri-left {
    border-top: 4px solid transparent;
    border-bottom: 4px solid transparent;
    border-right: 4px solid #c0c0c0;
}

.tri-right {
    border-top: 4px solid transparent;
    border-bottom: 4px solid transparent;
    border-left: 4px solid #c0c0c0;
}

.tri-left.dark { border-right-color: #777; }
.tri-right.dark { border-left-color: #777; }

/* シートタブ */
.sheetbar {
    height: 29px;
    border-bottom: 1px solid #c6c6c6;
    display: flex;
    align-items: flex-start;
    background-color: #e6e6e6;
    flex: none;
    position: relative;
    font-size: 12px;
}

.sheet-nav {
    width: 100px;
    height: 28px;
    display: flex;
    align-items: center;
    gap: 24px;
    padding-left: 27px;
}

.sheet-tab {
    width: 81px;
    height: 25px;
    margin-top: 0;
    display: flex;
    align-items: center;
    justify-content: center;
    color: #444;
    position: relative;
    letter-spacing: 0.9px;
}

.sheet-tab::after {
    content: "";
    position: absolute;
    right: 0;
    top: 4px;
    height: 19px;
    width: 1px;
    background-color: #a6a6a6;
}

.active-tab {
    background-color: #fff;
    color: #217346;
    border-bottom: 2px solid #217346;
}

.active-tab::after { display: none; }

.member { width: 66px; letter-spacing: -0.8px; }

.add { margin: 6px 0 0 34px; }

.hdots {
    position: absolute;
    left: 817px;
    top: 8px;
    width: 2px;
    height: 12px;
    background-image: linear-gradient(#aaa 2px, transparent 2px);
    background-size: 2px 4px;
}

.hscroll {
    position: absolute;
    left: 836px;
    top: 7px;
    width: 510px;
    height: 15px;
    display: flex;
}

.sb-btn.h { width: 14px; }

.h-thumb {
    width: 454px;
    background-color: #fff;
    border: 1px solid #ababab;
    border-left: 0;
}

.h-track {
    width: 25px;
    background-color: #dadada;
    margin-right: 3px;
}

/* ステータスバー */
.status {
    height: 21px;
    background-color: #f3f2f1;
    display: flex;
    align-items: center;
    padding-left: 8px;
    flex: none;
    font-size: 12px;
}

.stats {
    margin-left: auto;
    display: flex;
    gap: 16px;
    margin-right: 19px;
    color: #444;
}

.st-avg { letter-spacing: 0.5px; }
.st-count { letter-spacing: -0.3px; }
.st-sum { letter-spacing: 0.5px; }

.view {
    width: 38px;
    height: 21px;
    display: flex;
    align-items: center;
    justify-content: center;
}

.view-last { width: 37px; }

.view.on { background-color: #c6c6c6; }

.zoom {
    display: flex;
    align-items: center;
    margin-left: 3px;
}

.z-btn {
    width: 10px;
    text-align: center;
    font-weight: 700;
    font-size: 14px;
    color: #666;
}

.slider {
    width: 92px;
    height: 1px;
    margin: 0 4px;
    background-color: #999;
    position: relative;
}

.knob {
    position: absolute;
    left: 47px;
    top: -5px;
    width: 4px;
    height: 11px;
    background-color: #777;
}

.zoom-val {
    margin-left: 15px;
    margin-right: 9px;
    letter-spacing: 0.3px;
}
```
